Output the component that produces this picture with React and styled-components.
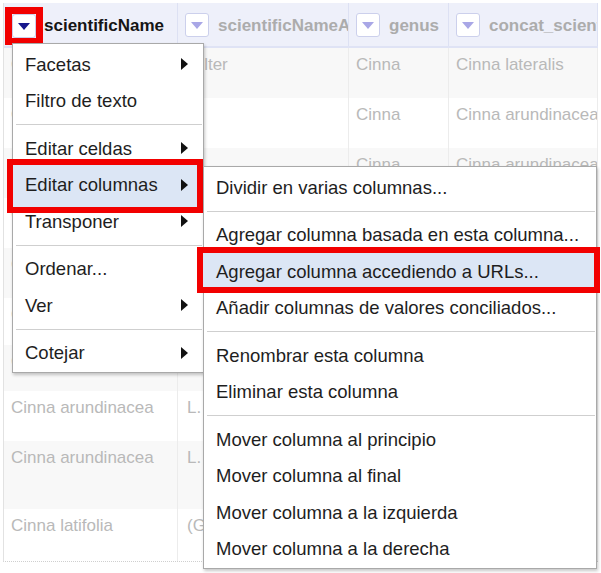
import React from "react";
import styled, { createGlobalStyle } from "styled-components";

const GlobalStyle = createGlobalStyle`
  body {
    margin: 0;
    background: #ffffff;
    font-family: "Liberation Sans", Arial, sans-serif;
  }
`;

const Screen = styled.div`
  position: relative;
  width: 601px;
  height: 573px;
  overflow: hidden;
  background: #fff;
`;

const Table = styled.div`
  margin: 3px 0 0 3px;
  width: 594px;
  border-left: 1px solid #e2e2e2;
  border-bottom: 1px dotted #cfcfcf;
`;

const HeaderRow = styled.div`
  display: grid;
  grid-template-columns: 174px 171px 100px 149px;
  height: 43px;
  background: #eef0fa;
  border-bottom: 2px solid #dfe3f5;
`;

const HeaderCell = styled.div`
  display: flex;
  align-items: center;
  gap: ${(p) => (p.$first ? "1px" : "9px")};
  padding-left: ${(p) => (p.$first ? "1px" : "7px")};
  border-right: 1px solid #dde1f3;
  overflow: hidden;
  white-space: nowrap;
`;

const HeaderName = styled.span`
  font-size: 17px;
  font-weight: bold;
  color: ${(p) => (p.$active ? "#151515" : "#acacac")};
  margin-top: 3px;
`;

const RedFrame = styled.div`
  border: 7px solid #f20000;
  line-height: 0;
  margin-top: 2px;
`;

const ArrowButton = styled.div`
  flex: none;
  width: 24px;
  height: 24px;
  box-sizing: border-box;
  background: #fff;
  border: 1px solid #ccd0ec;
  border-radius: 3px;
  display: flex;
  align-items: center;
  justify-content: center;
  &::after {
    content: "";
    border-top: 7px solid ${(p) => (p.$active ? "#17178c" : "#a9a7e6")};
    border-left: 6px solid transparent;
    border-right: 6px solid transparent;
    margin-top: 2px;
  }
`;

const Row = styled.div`
  display: grid;
  grid-template-columns: 174px 171px 100px 149px;
  height: ${(p) => p.$h}px;
  background: ${(p) => (p.$odd ? "#ffffff" : "#f8f8f8")};
`;

const Cell = styled.div`
  padding: 7px 0 0 ${(p) => p.$pad || 7}px;
  font-size: 17px;
  line-height: 20px;
  color: #b9b9b9;
  border-right: 1px solid #ececec;
  white-space: nowrap;
  overflow: hidden;
`;

const Menu = styled.div`
  position: absolute;
  left: ${(p) => p.$left}px;
  top: ${(p) => p.$top}px;
  width: ${(p) => p.$width}px;
  box-sizing: border-box;
  padding: 2px 0 1px;
  background: #fff;
  border: 1px solid #a9a9a9;
  box-shadow: 1px 2px 3px rgba(0, 0, 0, 0.22);
  z-index: ${(p) => p.$z};
`;

const Item = styled.div`
  position: relative;
  display: flex;
  align-items: center;
  justify-content: space-between;
  height: 36.5px;
  padding: 0 15px 0 12px;
  font-size: 18.5px;
  color: #1e1e1e;
  white-space: nowrap;
  ${(p) =>
    p.$mark &&
    `
    &::before {
      content: "";
      position: absolute;
      top: ${p.$mark[0]}px;
      right: ${p.$mark[1]}px;
      bottom: ${p.$mark[2]}px;
      left: ${p.$mark[3]}px;
      border: 6px solid #f20000;
      background: #dce6f5;
      z-index: 0;
    }
  `}
`;

const Label = styled.span`
  position: relative;
  z-index: 1;
  margin-top: 1px;
`;

const SubArrow = styled.span`
  position: relative;
  z-index: 1;
  width: 0;
  height: 0;
  border-left: 7px solid #111;
  border-top: 6px solid transparent;
  border-bottom: 6px solid transparent;
`;

const Separator = styled.div`
  height: 1px;
  margin: 5px 1px 5px 3px;
  background: #cfcfcf;
`;

const rows = [
  { h: 50, c: ["Cinna lateralis", "Filter", "Cinna", "Cinna lateralis"], pad2: 12 },
  { h: 50, c: ["Cinna arundinacea", "", "Cinna", "Cinna arundinacea"] },
  { h: 50, c: ["Cinna arundinacea", "", "Cinna", "Cinna arundinacea"] },
  { h: 50, c: ["Cinna latifolia", "", "", ""] },
  { h: 50, c: ["Cinna arundinacea", "", "", ""] },
  { h: 47, c: ["Cinna latifolia", "", "", ""] },
  { h: 46, c: ["Cinna arundinacea", "", "", ""] },
  { h: 50, c: ["Cinna arundinacea", "L.", "", ""] },
  { h: 68, c: ["Cinna arundinacea", "L.", "", ""] },
  { h: 52, c: ["Cinna latifolia", "(Griseb.) Griseb.", "", ""] },
];

const mainMenu = [
  ["Facetas", true],
  ["Filtro de texto", false],
  "sep",
  ["Editar celdas", true],
  ["Editar columnas", true, [-7.5, 0, -10, -6]],
  ["Transponer", true],
  "sep",
  ["Ordenar...", false],
  ["Ver", true],
  "sep",
  ["Cotejar", true],
];

const subMenu = [
  ["Dividir en varias columnas..."],
  "sep",
  ["Agregar columna basada en esta columna..."],
  ["Agregar columna accediendo a URLs...", false, [-6, -4, -3.5, -7]],
  ["Añadir columnas de valores conciliados..."],
  "sep",
  ["Renombrar esta columna"],
  ["Eliminar esta columna"],
  "sep",
  ["Mover columna al principio"],
  ["Mover columna al final"],
  ["Mover columna a la izquierda"],
  ["Mover columna a la derecha"],
];

const renderMenu = (entries) =>
  entries.map((e, i) =>
    e === "sep" ? (
      <Separator key={i} />
    ) : (
      <Item key={i} $mark={e[2]}>
        <Label>{e[0]}</Label>
        {e[1] && <SubArrow />}
      </Item>
    )
  );

const App = () => {
  return (
    <Screen>
      <GlobalStyle />
      <Table>
        <HeaderRow>
          <HeaderCell $first>
            <RedFrame>
              <ArrowButton $active />
            </RedFrame>
            <HeaderName $active>scientificName</HeaderName>
          </HeaderCell>
          <HeaderCell>
            <ArrowButton />
            <HeaderName>scientificNameAuthorship</HeaderName>
          </HeaderCell>
          <HeaderCell>
            <ArrowButton />
            <HeaderName>genus</HeaderName>
          </HeaderCell>
          <HeaderCell>
            <ArrowButton />
            <HeaderName>concat_scientificName</HeaderName>
          </HeaderCell>
        </HeaderRow>
        {rows.map((r, i) => (
          <Row key={i} $h={r.h} $odd={i % 2 === 1}>
            <Cell>{r.c[0]}</Cell>
            <Cell $pad={r.pad2 || 9}>{r.c[1]}</Cell>
            <Cell>{r.c[2]}</Cell>
            <Cell>{r.c[3]}</Cell>
          </Row>
        ))}
      </Table>
      <Menu $left={12} $top={43} $width={192} $z={2}>
        {renderMenu(mainMenu)}
      </Menu>
      <Menu $left={203} $top={166} $width={394} $z={3}>
        {renderMenu(subMenu)}
      </Menu>
    </Screen>
  );
};

export default App;
